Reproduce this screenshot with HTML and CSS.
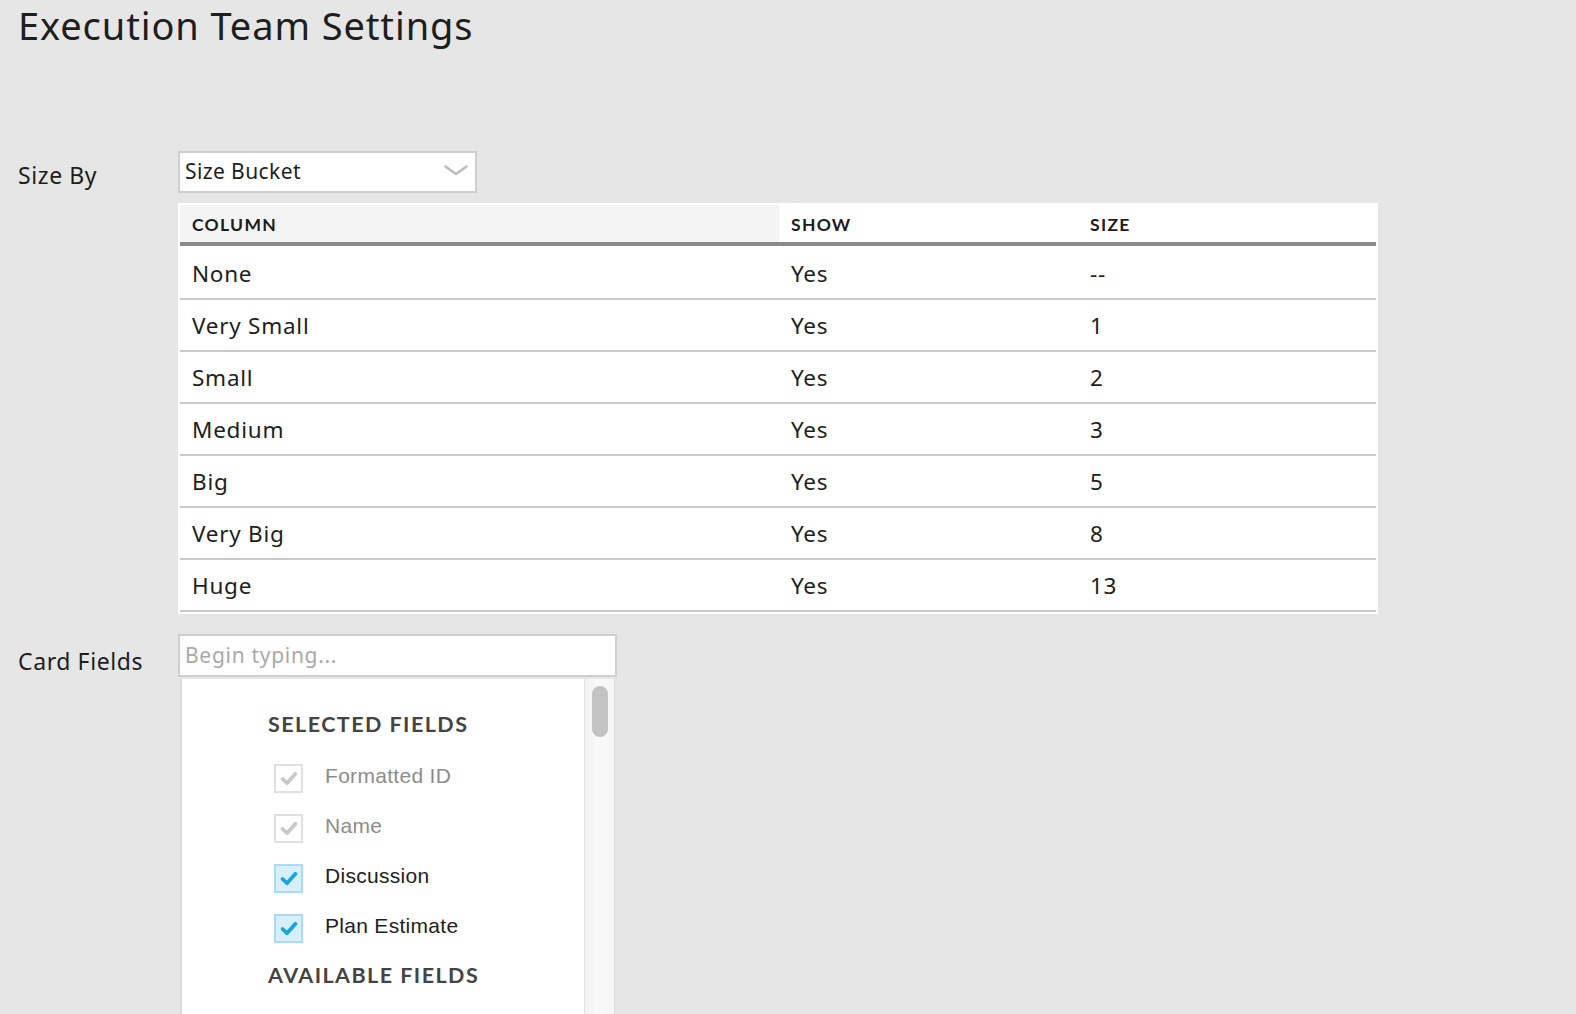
FILE: index.html
```html
<!DOCTYPE html>
<html>
<head>
<meta charset="utf-8">
<link rel="stylesheet" href="styles.css">
</head>
<body>
<h1 class="title">Execution Team Settings</h1>
<div class="form">
  <div class="field-row size-row">
    <div class="field-label">Size By</div>
    <div class="field-body">
      <div class="select">
        <span class="select-value">Size Bucket</span>
        <svg class="chevron" width="24" height="11" viewBox="0 0 24 11"><polyline points="1.5,1.5 12,9 22.5,1.5" fill="none" stroke="#bdbdbd" stroke-width="2.6" stroke-linejoin="round" stroke-linecap="round"/></svg>
      </div>
      <div class="grid">
        <div class="grid-row grid-head">
          <div class="cell cell-sorted">COLUMN</div>
          <div class="cell">SHOW</div>
          <div class="cell">SIZE</div>
        </div>
        <div class="grid-row"><div class="cell">None</div><div class="cell">Yes</div><div class="cell">--</div></div>
        <div class="grid-row"><div class="cell">Very Small</div><div class="cell">Yes</div><div class="cell">1</div></div>
        <div class="grid-row"><div class="cell">Small</div><div class="cell">Yes</div><div class="cell">2</div></div>
        <div class="grid-row"><div class="cell">Medium</div><div class="cell">Yes</div><div class="cell">3</div></div>
        <div class="grid-row"><div class="cell">Big</div><div class="cell">Yes</div><div class="cell">5</div></div>
        <div class="grid-row"><div class="cell">Very Big</div><div class="cell">Yes</div><div class="cell">8</div></div>
        <div class="grid-row"><div class="cell">Huge</div><div class="cell">Yes</div><div class="cell">13</div></div>
      </div>
    </div>
  </div>
  <div class="field-row card-row">
    <div class="field-label">Card Fields</div>
    <div class="field-body">
      <div class="text-input"><span class="placeholder">Begin typing...</span></div>
      <div class="picker">
        <div class="picker-list">
          <div class="group-title">SELECTED FIELDS</div>
          <div class="option disabled">
            <span class="checkbox"><svg width="18" height="15" viewBox="0 0 18 15"><path d="M2.6 8 L7 12.2 L15.4 2.8" fill="none" stroke="currentColor" stroke-width="3.8" stroke-linecap="round" stroke-linejoin="round"/></svg></span>
            <span class="option-label">Formatted ID</span>
          </div>
          <div class="option disabled">
            <span class="checkbox"><svg width="18" height="15" viewBox="0 0 18 15"><path d="M2.6 8 L7 12.2 L15.4 2.8" fill="none" stroke="currentColor" stroke-width="3.8" stroke-linecap="round" stroke-linejoin="round"/></svg></span>
            <span class="option-label">Name</span>
          </div>
          <div class="option checked">
            <span class="checkbox"><svg width="18" height="15" viewBox="0 0 18 15"><path d="M2.6 8 L7 12.2 L15.4 2.8" fill="none" stroke="currentColor" stroke-width="3.8" stroke-linecap="round" stroke-linejoin="round"/></svg></span>
            <span class="option-label">Discussion</span>
          </div>
          <div class="option checked">
            <span class="checkbox"><svg width="18" height="15" viewBox="0 0 18 15"><path d="M2.6 8 L7 12.2 L15.4 2.8" fill="none" stroke="currentColor" stroke-width="3.8" stroke-linecap="round" stroke-linejoin="round"/></svg></span>
            <span class="option-label">Plan Estimate</span>
          </div>
          <div class="group-title available">AVAILABLE FIELDS</div>
        </div>
        <div class="scroll-track"><div class="scroll-thumb"></div></div>
      </div>
    </div>
  </div>
</div>
</body>
</html>
```
FILE: styles.css
```css
html, body {
  margin: 0;
  padding: 0;
  overflow: hidden;
  height: 100%;
}
body {
  background: #e6e6e6;
  color: #222;
  font-family: "Noto Sans", "Open Sans", sans-serif;
  padding: 0 18px;
}
.title {
  margin: 3px 0 0 0;
  font-size: 38px;
  line-height: 44px;
  font-weight: 400;
  letter-spacing: 0.9px;
  color: #1e1e1e;
}
.form {
  margin-top: 104px;
}
.field-row {
  display: flex;
}
.field-label {
  width: 160px;
  flex: none;
  font-size: 23px;
  letter-spacing: 0.6px;
  line-height: 30px;
  color: #1e1e1e;
}
.size-row .field-label { padding-top: 9px; }
.card-row { margin-top: 20px; }
.card-row .field-label { padding-top: 12px; }
.field-body {
  display: flex;
  flex-direction: column;
  align-items: flex-start;
}
.select {
  box-sizing: border-box;
  width: 299px;
  height: 42px;
  border: 2px solid #cfcfcf;
  background: #fff;
  display: flex;
  align-items: center;
  justify-content: space-between;
  padding: 0 7px 0 5px;
}
.select-value {
  font-size: 21px;
  letter-spacing: 0.4px;
  color: #1e1e1e;
  padding-bottom: 2px;
}
.chevron { display: block; margin-top: -3px; }
.grid {
  margin-top: 10px;
  background: #fff;
  padding: 2px;
  width: 1196px;
}
.grid-row {
  display: grid;
  grid-template-columns: 599px 299px 1fr;
  height: 50px;
  border-bottom: 2px solid #c9c9c9;
  align-items: center;
}
.grid-row .cell {
  padding-left: 12px;
  font-size: 22.5px;
  letter-spacing: 0.75px;
  color: #1e1e1e;
  height: 100%;
  display: flex;
  align-items: center;
}
.grid-head {
  height: 37px;
  border-bottom: 4px solid #8a8a8a;
  margin-bottom: 2px;
}
.grid-head .cell {
  font-family: "Lato", sans-serif;
  font-weight: 700;
  font-size: 17.5px;
  letter-spacing: 1.3px;
  color: #1c1c1c;
  padding-top: 2px;
  box-sizing: border-box;
}
.grid-head .cell-sorted {
  background: #f4f4f4;
}
.text-input {
  box-sizing: border-box;
  width: 439px;
  height: 43px;
  border: 2px solid #cfcfcf;
  background: #fff;
  display: flex;
  align-items: center;
  padding-left: 5px;
}
.placeholder {
  font-size: 21px;
  letter-spacing: 0.7px;
  color: #a9a9a9;
  padding-bottom: 2px;
}
.picker {
  margin-top: 2px;
  margin-left: 2px;
  width: 435px;
  height: 400px;
  display: flex;
  border-left: 2px solid #d9d9d9;
  box-sizing: border-box;
}
.picker-list {
  flex: 1;
  background: #fff;
  padding: 33px 0 0 86px;
}
.group-title {
  font-family: "Lato", sans-serif;
  font-weight: 700;
  font-size: 21.5px;
  line-height: 25px;
  letter-spacing: 1.45px;
  color: #444;
  margin-bottom: 16px;
}
.group-title.available {
  margin-top: 10px;
}
.option {
  height: 50px;
  display: flex;
  align-items: center;
  padding-left: 6px;
}
.checkbox {
  box-sizing: border-box;
  width: 29px;
  height: 29px;
  border: 2px solid #e0e0e0;
  background: #fff;
  display: flex;
  align-items: center;
  justify-content: center;
  color: #c9c9c9;
  flex: none;
}
.checkbox svg { display: block; margin-top: 1px; }
.option.checked .checkbox {
  background: #d6effa;
  border-color: #a9dcf3;
  color: #1aa5de;
}
.option-label {
  margin-left: 22px;
  font-family: "Liberation Sans", Arial, sans-serif;
  font-size: 21px;
  letter-spacing: 0.3px;
  color: #1e1e1e;
  padding-bottom: 5px;
}
.option.disabled .option-label {
  color: #8c8c8c;
}
.scroll-track {
  width: 31px;
  box-sizing: border-box;
  border-left: 1px solid #e2e2e2;
  border-right: 1px solid #dcdcdc;
  background: linear-gradient(to right, #f1f1f1, #fafafa 40%, #f6f6f6);
  padding: 7px 0 0 7px;
}
.scroll-thumb {
  width: 16px;
  height: 51px;
  border-radius: 8px;
  background: #c3c3c3;
}
```
